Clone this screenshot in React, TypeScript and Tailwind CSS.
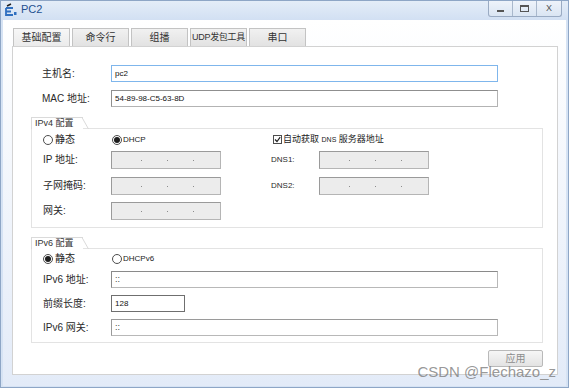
import React from 'react';

const cjk = "font-['Liberation_Sans','Noto_Sans_CJK_SC',sans-serif]";

function Radio({ checked }: { checked?: boolean }) {
  return (
    <span className="flex h-[10px] w-[10px] shrink-0 items-center justify-center rounded-full border border-[#4d4d4d] bg-white">
      {checked && <span className="h-[6px] w-[6px] rounded-full bg-[#1e1e1e]" />}
    </span>
  );
}

function Check() {
  return (
    <span className="flex h-[9px] w-[9px] shrink-0 items-center justify-center border border-[#4d4d4d] bg-white">
      <svg width="7" height="7" viewBox="0 0 7 7">
        <path d="M1 3.5 L3 5.5 L6.2 1.2" fill="none" stroke="#222" strokeWidth="1.2" />
      </svg>
    </span>
  );
}

function IpBox() {
  return (
    <div className="flex h-[18px] w-[110px] items-center gap-[25px] border border-[#b5b5b5] border-l-[#9a9a9a] border-t-[#9a9a9a] bg-[#ececec] pl-[29px]">
      <span className="h-[1px] w-[1px] bg-[#8c8c8c]" />
      <span className="h-[1px] w-[1px] bg-[#8c8c8c]" />
      <span className="h-[1px] w-[1px] bg-[#8c8c8c]" />
    </div>
  );
}

function Label({ text, w }: { text: string; w: string }) {
  return <span className={`${w} shrink-0 text-[10px] leading-none text-[#2a2a2a]`}>{text}</span>;
}

function GroupTab({ text }: { text: string }) {
  return (
    <div className="relative z-10 -mb-px flex h-[12px] w-[52px] items-center border-l border-t border-[#dadada] bg-white pl-[3px]">
      <span className="whitespace-nowrap text-[9px] leading-none text-[#333]">{text}</span>
      <svg className="absolute -right-[6px] -top-px" width="7" height="12" viewBox="0 0 7 12">
        <path d="M0 0.5 L6.5 12" stroke="#dadada" strokeWidth="1" fill="none" />
      </svg>
    </div>
  );
}

const tabs = ['基础配置', '命令行', '组播', 'UDP发包工具', '串口'];

export default function App() {
  return (
    <div className={`relative flex h-[388px] w-[569px] flex-col overflow-hidden border border-[#8ea6c6] bg-[#d6e3f4] ${cjk}`}>
      {/* title bar */}
      <div className="flex h-[19px] shrink-0 items-start bg-gradient-to-b from-[#e4edf8] to-[#d2e0f3]">
        <svg className="ml-[4px] mt-[2px]" width="12" height="13" viewBox="0 0 12 13">
          <path d="M2 3 L6 1" stroke="#222" strokeWidth="1.4" />
          <path d="M1 5 H8 M1 5 V12 H8 M1 8.5 H6" stroke="#2f6fc0" strokeWidth="1.8" fill="none" />
          <rect x="9" y="9" width="2.5" height="3" fill="#2f6fc0" />
        </svg>
        <span className="ml-[4px] mt-[3px] text-[11px] leading-none text-[#1f4f8f]">PC2</span>
        <div className="ml-auto mr-[6px] flex h-[16px] overflow-hidden rounded-b-[3px] border border-t-0 border-[#9aabc3] bg-gradient-to-b from-[#eef3fa] to-[#dae5f3]">
          <div className="flex w-[24px] items-center justify-center border-r border-[#a9b8cc]">
            <span className="mt-[5px] h-[2px] w-[7px] bg-[#555]" />
          </div>
          <div className="flex w-[24px] items-center justify-center border-r border-[#a9b8cc]">
            <span className="h-[7px] w-[9px] border border-t-[2px] border-[#555]" />
          </div>
          <div className="flex w-[24px] items-center justify-center text-[9px] leading-none text-[#555]">X</div>
        </div>
      </div>

      {/* client */}
      <div className="mx-[2px] mb-[1px] flex flex-1 flex-col bg-gradient-to-b from-white to-[#e3ebf8] pb-[11px] pl-[9px] pr-[8px] pt-[8px]">
        <div className="flex h-[18px] gap-[2px] pl-[1px]">
          {tabs.map((t, i) => (
            <div
              key={t}
              className={`flex w-[57px] items-center justify-center whitespace-nowrap border border-b-0 border-[#c3c3c3] leading-none text-[#333] ${i === 3 ? 'text-[9px] tracking-[-0.3px]' : 'text-[10px]'} ${i === 0 ? 'bg-gradient-to-b from-[#f7f7f7] to-[#ebebeb]' : 'bg-gradient-to-b from-[#f1f1f1] to-[#e2e2e2]'}`}
            >
              {t}
            </div>
          ))}
        </div>

        <div className="flex flex-1 flex-col border border-[#d2d2d2] bg-white pt-[18px]">
          <div className="flex h-[17px] items-center pl-[29px]">
            <Label text="主机名:" w="w-[69px]" />
            <div className="flex h-[17px] w-[387px] items-center border border-[#7fb6ec] pl-[3px] text-[8px] text-[#111]">pc2</div>
          </div>
          <div className="mt-[8px] flex h-[17px] items-center pl-[29px]">
            <Label text="MAC 地址:" w="w-[69px]" />
            <div className="flex h-[17px] w-[387px] items-center border border-[#b3b3b3] border-l-[#8f8f8f] border-t-[#8f8f8f] pl-[3px] text-[8px] text-[#111]">54-89-98-C5-63-8D</div>
          </div>

          {/* IPv4 */}
          <div className="ml-[18px] mt-[10px] w-[512px]">
            <GroupTab text="IPv4 配置" />
            <div className="flex h-[100px] border border-[#e3e3e3] pl-[11px] pt-[4px]">
              <div className="flex w-[228px] flex-col">
                <div className="flex h-[13px] items-center">
                  <div className="flex w-[69px] items-center gap-[2px]">
                    <Radio />
                    <span className="text-[10px] leading-none text-[#222]">静态</span>
                  </div>
                  <div className="flex items-center gap-[1px]">
                    <Radio checked />
                    <span className="text-[8px] leading-none text-[#222]">DHCP</span>
                  </div>
                </div>
                <div className="mt-[5px] flex items-center">
                  <Label text="IP 地址:" w="w-[68px]" />
                  <IpBox />
                </div>
                <div className="mt-[8px] flex items-center">
                  <Label text="子网掩码:" w="w-[68px]" />
                  <IpBox />
                </div>
                <div className="mt-[7px] flex items-center">
                  <Label text="网关:" w="w-[68px]" />
                  <IpBox />
                </div>
              </div>
              <div className="flex flex-col">
                <div className="flex h-[13px] items-center gap-[1px] pl-[2px]">
                  <Check />
                  <span className="whitespace-nowrap text-[9px] leading-none text-[#222]">
                    自动获取 <span className="text-[7px]">DNS</span> 服务器地址
                  </span>
                </div>
                <div className="mt-[5px] flex items-center">
                  <Label text="DNS1:" w="w-[48px] !text-[8px]" />
                  <IpBox />
                </div>
                <div className="mt-[8px] flex items-center">
                  <Label text="DNS2:" w="w-[48px] !text-[8px]" />
                  <IpBox />
                </div>
              </div>
            </div>
          </div>

          {/* IPv6 */}
          <div className="ml-[18px] mt-[9px] w-[512px]">
            <GroupTab text="IPv6 配置" />
            <div className="flex h-[95px] flex-col border border-[#e3e3e3] pl-[11px] pt-[3px]">
              <div className="flex h-[13px] items-center">
                <div className="flex w-[69px] items-center gap-[2px]">
                  <Radio checked />
                  <span className="text-[10px] leading-none text-[#222]">静态</span>
                </div>
                <div className="flex items-center gap-[1px]">
                  <Radio />
                  <span className="text-[8px] leading-none text-[#222]">DHCPv6</span>
                </div>
              </div>
              <div className="mt-[6px] flex items-center">
                <Label text="IPv6 地址:" w="w-[68px]" />
                <div className="flex h-[17px] w-[387px] items-center border border-[#8a8a8a] border-b-[#b8b8b8] border-r-[#b8b8b8] pl-[3px] text-[9px] text-[#444]">::</div>
              </div>
              <div className="mt-[7px] flex items-center">
                <Label text="前缀长度:" w="w-[68px]" />
                <div className="flex h-[17px] w-[74px] items-center border border-[#6f6f6f] pl-[3px] text-[8px] text-[#111]">128</div>
              </div>
              <div className="mt-[7px] flex items-center">
                <Label text="IPv6 网关:" w="w-[68px]" />
                <div className="flex h-[17px] w-[387px] items-center border border-[#b8b8b8] border-l-[#9a9a9a] border-t-[#9a9a9a] pl-[3px] text-[9px] text-[#444]">::</div>
              </div>
            </div>
          </div>

          <div className="mr-[14px] mt-[7px] flex h-[17px] w-[55px] items-center justify-center self-end rounded-[2px] border border-[#b9b9b9] bg-gradient-to-b from-[#f6f6f6] to-[#e3e3e3] text-[10px] leading-none text-[#8c8c8c]">
            应用
          </div>
        </div>
      </div>

      <span className="absolute bottom-[8px] right-[12px] font-['Liberation_Sans',sans-serif] text-[15px] leading-none text-[#7d7d7d]/80">
        CSDN @Flechazo_z
      </span>
    </div>
  );
}
